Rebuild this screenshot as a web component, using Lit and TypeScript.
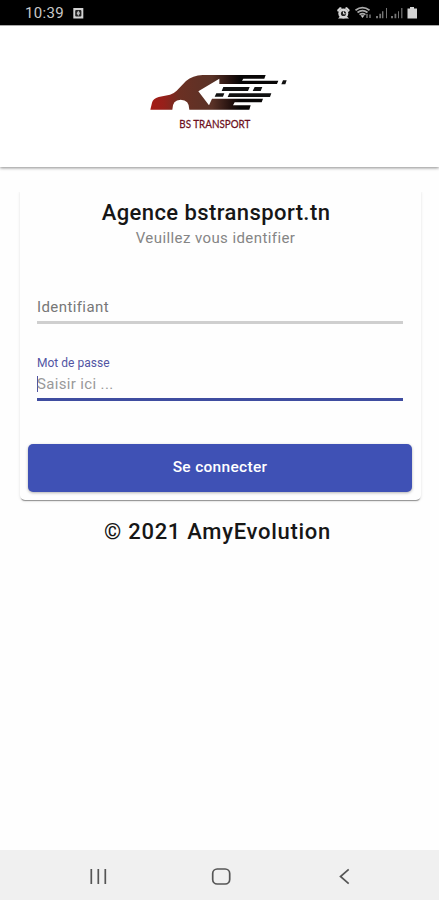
import { LitElement, html, css } from "lit";
import { customElement } from "lit/decorators.js";

@customElement("status-bar")
class StatusBar extends LitElement {
  static styles = css`
    :host { display: flex; justify-content: space-between; box-sizing: border-box; height: 25px; background: #000; flex: none; }
    .left { display: flex; padding-left: 25px; }
    .time { font: 400 15px/27px Roboto, sans-serif; color: #c9c9c9; width: 48px; letter-spacing: 0.35px; }
    svg { display: block; }
  `;
  render() {
    return html`
      <div class="left">
        <span class="time">10:39</span>
        <svg width="12" height="25" viewBox="0 0 12 25">
          <rect x="0.3" y="8" width="10" height="10.5" fill="#d2d2d2" />
          <rect x="2.2" y="10" width="6.2" height="6.5" rx="1" fill="#222" />
          <path d="M5.3 10.5 7 13.2 5.3 16 3.6 13.2z" fill="#bbb" />
        </svg>
      </div>
      <svg width="119" height="25" viewBox="0 0 119 25">
        <g fill="#d5d5d5">
          <circle cx="23.3" cy="13.4" r="5" />
          <path d="M17 10l3-3 2 1-4 4zM29.8 10l-3-3-2 1 4 4zM18 18.5l2-2h7l2 2z" />
        </g>
        <circle cx="23.5" cy="13.5" r="2.6" fill="#222" />
        <path d="M23.5 11.5v2.3h2" fill="none" stroke="#ddd" />
        <g fill="none" stroke="#aaa" stroke-width="1.7">
          <path d="M35.5 10.2q7-5.2 14 0M37.5 12.5q5-3.6 10 0M39.5 14.6q3-2 6 0" />
        </g>
        <path d="M40.5 15.3h4L42.5 18z" fill="#ccc" />
        <path d="M47 14v4M50 14.5V18" stroke="#888" stroke-width="1.3" />
        <g fill="#757575">
          <path d="M56 16h2v2.3h-2zM59.3 13.8h1.8v4.5h-1.8zM62 11.3h1.4v7H62zM66 8h1v10.3h-1z" />
          <path d="M71 16h2v2.3h-2zM74.5 13.8h1.8v4.5h-1.8zM78 11.3h1v7h-1zM81.2 8h1.2v10.3h-1.2z" />
        </g>
        <path d="M90 7h4v1.5h3v10H87.5v-10H90z" fill="#d4d4d4" />
      </svg>
    `;
  }
}

@customElement("brand-logo")
class BrandLogo extends LitElement {
  static styles = css`
    :host { display: block; width: 155px; height: 70px; }
    svg { display: block; }
    .name { font: 400 36px "Lato", sans-serif; fill: #6c1020; stroke: #6c1020; stroke-width: 0.8; }
  `;
  render() {
    return html`
      <svg width="155" height="70" viewBox="0 0 465 210">
        <defs>
          <linearGradient id="body" gradientUnits="userSpaceOnUse" x1="30" y1="0" x2="330" y2="0">
            <stop offset="0" stop-color="#a51b16" />
            <stop offset="0.14" stop-color="#96201a" />
            <stop offset="0.3" stop-color="#6b3023" />
            <stop offset="0.62" stop-color="#5a3227" />
            <stop offset="0.8" stop-color="#25120f" />
            <stop offset="0.9" stop-color="#080606" />
          </linearGradient>
        </defs>
        <path fill="url(#body)" d="M31 131 36 110Q39 98 56 93L90 86Q102 82 110 74L138 45Q158 28 188 27H377L373 38H310L306 44H415L411 54H238V38L175 76 207 118 216 98H369L365 109H284L279 118H332L328 131H148Q148 101 122 101 97 101 97 131Z" />
        <path fill="#111" d="M250 63H329L324 75H245zM344 63H367L362 75H338zM429 43H440L436 55H424zM268 82H394L390 93H263zM229 82H253L249 92H224z" />
        <text class="name" x="118" y="187" textLength="213" lengthAdjust="spacingAndGlyphs">BS TRANSPORT</text>
      </svg>
    `;
  }
}

@customElement("app-root")
class AppRoot extends LitElement {
  static styles = css`
    :host { display: flex; flex-direction: column; height: 900px; background: #fefefe; font-family: Roboto, sans-serif; color: #161616; overflow: hidden; }
    * { box-sizing: border-box; }
    .header { flex: none; height: 142px; padding: 40px 0 0 140px; background: #fff; border-top: 1px solid #aaa; box-shadow: 0 1px 3px rgba(0,0,0,.45); }
    main { flex: 1; padding: 21px 18px 0 20px; }
    .card { height: 312px; border-radius: 5px; background: #fefefe; box-shadow: 0 2px 1px -1px rgba(0,0,0,.38), 0 1px 3px rgba(0,0,0,.13); padding: 0 9px 0 8px; clip-path: inset(4px -5px -5px -5px); }
    .titles { height: 97px; display: flex; flex-direction: column; align-items: center; padding: 12px 9px 0 0; }
    h1 { margin: 0; font-size: 22px; line-height: 26px; font-weight: 500; letter-spacing: 0.42px; white-space: nowrap; margin-right: -1px; }
    .sub { font-size: 15px; line-height: 25px; color: #858585; letter-spacing: 0.41px; }
    .field { margin: 0 9px; display: flex; flex-direction: column; }
    .user { height: 39px; border-bottom: 3px solid #cfcfcf; font-size: 15px; line-height: 44px; color: #777; letter-spacing: 0.4px; }
    .pass { height: 77px; border-bottom: 3px solid #3f4da0; padding-top: 31px; }
    .label { font-size: 12px; line-height: 17px; color: #5255a3; letter-spacing: 0.02px; }
    .entry { display: flex; align-items: center; height: 24px; font-size: 15px; color: #999; letter-spacing: 0.35px; }
    .caret { width: 1px; height: 16px; margin-right: -1px; background: #5054a0; }
    .button { display: flex; align-items: center; justify-content: center; width: 384px; height: 48px; margin-top: 43px; padding: 0 0 2px; border: 0; border-radius: 5px; background: #3f51b5; color: #fff; font: 500 15.5px Roboto, sans-serif; letter-spacing: 0.3px; box-shadow: 0 1px 3px rgba(0,0,0,.3); }
    .copy { margin: 18px 6px 0 0; text-align: center; font-size: 22px; line-height: 28px; font-weight: 500; letter-spacing: 0.7px; }
    nav { flex: none; display: flex; height: 50px; background: #f0f0f0; }
    nav svg { display: block; }
  `;
  render() {
    return html`
      <status-bar></status-bar>
      <header class="header"><brand-logo></brand-logo></header>
      <main>
        <section class="card">
          <div class="titles">
            <h1>Agence bstransport.tn</h1>
            <div class="sub">Veuillez vous identifier</div>
          </div>
          <div class="field user">Identifiant</div>
          <div class="field pass">
            <span class="label">Mot de passe</span>
            <div class="entry"><i class="caret"></i><span>Saisir ici ...</span></div>
          </div>
          <button class="button">Se connecter</button>
        </section>
        <div class="copy">© 2021 AmyEvolution</div>
      </main>
      <nav>
        <svg width="439" height="50" viewBox="0 0 439 50" fill="none" stroke="#555" stroke-width="1.7">
          <path d="M91.3 19v15M98.3 19v15M105.3 19v15" />
          <rect x="212.7" y="19" width="17" height="15" rx="4.5" />
          <path d="M348.7 19.3 340.5 26.5l8.2 7.2" />
        </svg>
      </nav>
    `;
  }
}
